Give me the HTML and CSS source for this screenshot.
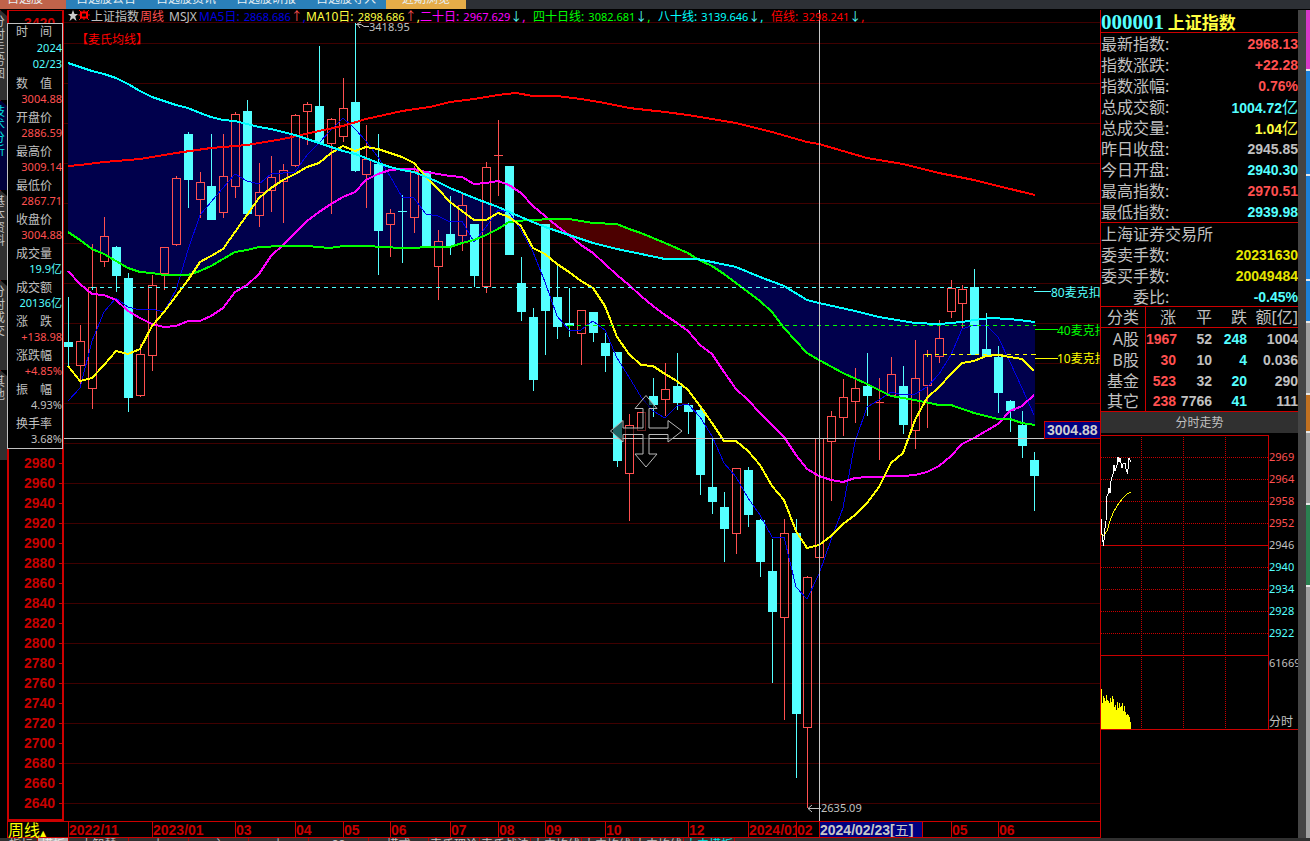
FILE: index.html
```
<!DOCTYPE html>
<html lang="zh-CN">
<head>
<meta charset="utf-8">
<title>上证指数 周线</title>
<link rel="stylesheet" href="styles.css">
</head>
<body>
<nav class="tabs">
  <a class="tab tab-own" href="#">自选股</a>
  <a class="tab" href="#">自选股公告</a>
  <a class="tab" href="#">自选股资讯</a>
  <a class="tab" href="#">自选股研报</a>
  <a class="tab" href="#">自选股导入</a>
  <a class="tab tab-recent" href="#">近期浏览</a>
</nav>
<div class="app">
  <nav class="side">
    <a class="side-tab" href="#"><span>分时走势图</span></a>
    <a class="side-tab side-on" href="#"><span>技术分析</span></a>
    <a class="side-tab" href="#"><span>基本资料</span></a>
    <a class="side-tab" href="#"><span>分时成交</span></a>
    <a class="side-tab" href="#"><span>其他</span></a>
  </nav>
  <main class="main">
    <div class="chart-row">
      <div class="axis">
        <div class="axis-labels" id="axis"></div>
        <section class="info">
          <div class="info-date"><h3>时　间</h3><p class="c">2024</p><p class="c">02/23</p></div>
          <div class="info-item"><h3>数　值</h3><p class="r">3004.88</p></div>
          <div class="info-item"><h3>开盘价</h3><p class="r">2886.59</p></div>
          <div class="info-item"><h3>最高价</h3><p class="r">3009.14</p></div>
          <div class="info-item"><h3>最低价</h3><p class="r">2867.71</p></div>
          <div class="info-item"><h3>收盘价</h3><p class="r">3004.88</p></div>
          <div class="info-item"><h3>成交量</h3><p class="c">19.9亿</p></div>
          <div class="info-item"><h3>成交额</h3><p class="c">20136亿</p></div>
          <div class="info-item"><h3>涨　跌</h3><p class="r">+138.98</p></div>
          <div class="info-item"><h3>涨跌幅</h3><p class="r">+4.85%</p></div>
          <div class="info-item"><h3>振　幅</h3><p>4.93%</p></div>
          <div class="info-item"><h3>换手率</h3><p>3.68%</p></div>
        </section>
      </div>
      <div class="plot">
        <svg class="plot-svg" viewBox="64 10 1036 811" preserveAspectRatio="xMinYMin meet">
          <g id="grid" class="grid"></g>
          <g id="bands"></g>
          <g id="candles" class="candles"></g>
          <g id="lines" class="lines"></g>
          <g class="dashes">
            <path d="M92 287.5H1034" stroke="#5ff"/><path d="M569 325.5H1034" stroke="#0f0"/><path d="M927 354.5H1034" stroke="#ff0"/>
            <path class="solid" d="M1034 291.5H1051M91 287.5h3M92.500 287v3M1033 287.500h3" stroke="#5ff"/><path class="solid" d="M1035 329.5H1058M567 325.5h5M569.500 325v3M1033 325.500h3" stroke="#0f0"/><path class="solid" d="M1035 358.5H1058M925 354.5h5M927.500 354v3M1033 354.500h3" stroke="#ff0"/>
          </g>
          <g class="cjk">
            <text x="1051" y="297" fill="#5ff">80麦克扣</text>
            <text x="1057" y="335" fill="#0f0">40麦克扣</text>
            <text x="1057" y="363" fill="#ff0">10麦克扣</text>
            <text x="76" y="44" class="title">【麦氏均线】</text>
          </g>
          <path class="note" d="M369 26.5h-5l-3-2h-5M361 22l-4 2l3 4M821 808.5H808M812 805l-4 3.5l4 3.5"/>
          <text class="num" x="369" y="31">3418.95</text>
          <text class="num" x="821" y="812">2635.09</text>
          <path class="cross" d="M64 438.5H1100M819.5 10V821"/>
          <rect class="price-box" x="1044.5" y="421.5" width="56" height="17"/>
          <text class="price" x="1047" y="435">3004.88</text>
          <path class="move" d="M610.5 431L623 420.500V428H643V408.500H635L646 395.500L657 408.500H649V428H668V420.500L682 431L668 442V434.500H649V454H657L646 467L635 454H643V434.500H623V442Z"/>
        </svg>
        <header class="legend">
          <span class="icons"><svg width="22" height="12" viewBox="0 0 22 12"><path fill="#ccc" d="M5 0l1.500 4H10L7.200 6.600L8.500 11L5 8.300L1.500 11L2.800 6.600L0 4h3.500z"/><path fill="none" stroke="#f00" stroke-width="2" d="M13 2.500h6v5h-6z"/><path stroke="#f00" fill="none" d="M11 0l2 2M21 0l-2 2M11 10l2-2M21 10l-2-2M10.500 5h2M20 5h2M16 0v2M16 8v2"/></svg></span>
          <span>上证指数</span><span class="red-soft">周线</span><span>MSJX</span>
          <span class="blue">MA5日: <b>2868.686</b><i class="red-soft">↑</i>,</span>
          <span class="yellow">MA10日: <b>2898.686</b><i class="red-soft">↑</i>,</span>
          <span class="magenta">二十日: <b>2967.629</b><i class="c">↓</i>,</span>
          <span class="green">四十日线: <b>3082.681</b><i class="c">↓</i>,</span>
          <span class="aqua">八十线: <b>3139.646</b><i class="c">↓</i>,</span>
          <span class="red">倍线: <b>3298.241</b><i class="c">↓</i>,</span>
        </header>
      </div>
    </div>
    <div class="timeline">
      <button class="period">周线<small>▲</small></button>
      <span>2022/11</span><span>2023/01</span><span>03</span><span>04</span><span>05</span><span>06</span><span>07</span><span>08</span><span>09</span><span>10</span><span>12</span><span>2024/01</span><span>02</span><span class="now">2024/02/23[<em>五</em>]</span><span></span><span>05</span><span>06</span>
    </div>
  </main>
  <aside class="quote">
    <h1><b>000001</b> 上证指数</h1>
    <dl class="rows">
      <div><dt>最新指数:</dt><dd class="r">2968.13</dd></div>
      <div><dt>指数涨跌:</dt><dd class="r">+22.28</dd></div>
      <div><dt>指数涨幅:</dt><dd class="r">0.76%</dd></div>
      <div><dt>总成交额:</dt><dd class="c">1004.72<em>亿</em></dd></div>
      <div><dt>总成交量:</dt><dd class="y">1.04<em>亿</em></dd></div>
      <div><dt>昨日收盘:</dt><dd>2945.85</dd></div>
      <div><dt>今日开盘:</dt><dd class="c">2940.30</dd></div>
      <div><dt>最高指数:</dt><dd class="r">2970.51</dd></div>
      <div><dt>最低指数:</dt><dd class="c">2939.98</dd></div>
    </dl>
    <dl class="rows">
      <div><dt>上海证券交易所</dt></div>
      <div><dt>委卖手数:</dt><dd class="gold">20231630</dd></div>
      <div><dt>委买手数:</dt><dd class="gold">20049484</dd></div>
      <div><dt class="indent">委比:</dt><dd class="c">-0.45%</dd></div>
    </dl>
    <table class="stats">
      <thead><tr><th>分类</th><th>涨</th><th>平</th><th>跌</th><th>额[亿]</th></tr></thead>
      <tbody>
        <tr><th>A股</th><td class="r">1967</td><td>52</td><td class="c">248</td><td>1004</td></tr>
        <tr><th>B股</th><td class="r">30</td><td>10</td><td class="c">4</td><td>0.036</td></tr>
        <tr><th>基金</th><td class="r">523</td><td>32</td><td class="c">20</td><td>290</td></tr>
        <tr><th>其它</th><td class="r">238</td><td>7766</td><td class="c">41</td><td>111</td></tr>
      </tbody>
    </table>
    <h2>分时走势</h2>
    <div class="mini">
      <svg class="mini-svg" viewBox="1101 434 168 294">
        <path class="mini-dots" d="M1101 456.500H1268M1101 478.500H1268M1101 500.500H1268M1101 522.500H1268M1101 566.500H1268M1101 588.500H1268M1101 610.500H1268M1101 632.500H1268M1141.500 436V728M1183.500 436V728M1225.500 436V728"/>
        <path class="mini-frame" d="M1101 434.500H1268.500V728M1101 544.500H1268M1101 654.500H1268"/>
        <path fill="#ff0" d="M1101 728V688h1v14h1v-7h1v2h1v3h1v-6h1v5h1v1h1v2h1v-5h1v4h1v-6h1v3h1v8h1v-2h1v5h1v-8h1v6h1v-5h1v4h1v-1h1v-3h1v8h1v-5h1v6h1v3h1v-1h1v1h1v2h1v5h1v10z"/>
        <path class="mini-avg" d="M1101 532L1103 535L1107 530L1110 520L1113 512L1117 505L1122 498L1127 493L1131 491"/>
        <path class="mini-price" d="M1101.500 518L1102 533L1103.500 545L1105 527L1106 520L1107 495L1108 493L1109 487L1110 492L1111 480L1113 473L1114 464L1115 470L1117 464L1118 456L1119 461L1120 457L1122 467L1123 463L1125 462L1126 468L1127.500 473L1129 457L1131 461"/>
      </svg>
      <div class="mini-labels">
        <span class="r">2969</span><span class="r">2964</span><span class="r">2958</span><span class="r">2952</span><span>2946</span><span class="c">2940</span><span class="c">2934</span><span class="c">2928</span><span class="c">2922</span><span class="vol">61669</span><em>分时</em>
      </div>
    </div>
  </aside>
  <div class="edge"></div>
  <div class="behind"><i class="pink"></i><i class="sky"></i><i class="sky"></i><i class="sky tall"></i><i class="gray"></i><i class="orange"></i><i class="gray"></i><i class="leaf"></i><i class="gray rest"></i></div>
</div>
<footer class="templates">
  <a href="#">指标</a><a class="lit" href="#">模板</a><a class="wide" href="#">大智慧</a><a class="wide" href="#">上</a><a class="wide" href="#">主</a><a class="wide" href="#">上</a><a class="wide" href="#">88</a><a class="wide" href="#">模式</a><a href="#">麦氏理论</a><a href="#">麦氏战法</a><a href="#">大中均线</a><a href="#">大中均线</a><a href="#">大中均线</a><a class="cyan" href="#">大中模板</a>
</footer>
<script src="chart.js"></script>
</body>
</html>
```
FILE: styles.css
```
* { box-sizing: border-box; margin: 0; padding: 0; }
body {
  min-height: 100vh; background: #000; color: #c0c0c0; overflow: hidden;
  display: flex; flex-direction: column;
  font: 12px/14px "Noto Sans", "Noto Sans CJK SC", sans-serif;
}
a { color: inherit; text-decoration: none; }
em, i { font-style: normal; font-weight: normal; }
.r, .red-soft { color: #ff5050; }
.c { color: #54ffff; }
.y, .yellow { color: #ffff40; }
.gold { color: #e6e600; }
.blue { color: #0000e0; }
.magenta { color: #ff00ff; }
.green { color: #00ff00; }
.aqua { color: #00ffff; }
.red { color: #ff0000; }

.tabs { display: flex; height: 9px; background: #2d3035; overflow: hidden; flex: none; }
.tab { width: 80px; height: 9px; background: #2a80b9; color: #e8f0f4; line-height: 12px; display: flex; justify-content: center; align-items: flex-end; padding-bottom: 4px; }
.tab-own { width: 66px; background: #c0634a; padding-right: 16px; }
.tab-recent { background: #e5ac48; }

.app { flex: 1; display: flex; min-height: 0; padding-top: 1px; }
.side { width: 7px; flex: none; overflow: hidden; display: flex; flex-direction: column; background: #000; }
.side-tab { height: 90px; flex: none; background: #303030; border-top: 1px solid #b00; display: flex; justify-content: flex-end; padding-top: 4px; clip-path: polygon(0 0, 100% 6px, 100% 100%, 0 100%); }
.side-tab span { width: 12px; font-size: 12px; line-height: 13px; word-break: break-all; margin-right: 2px; flex: none; }
.side-on { background: #00003c; color: #00e0e0; }

.main { flex: 1; min-width: 0; display: flex; flex-direction: column; }
.chart-row { flex: 1; display: flex; min-height: 0; }
.axis { width: 57px; flex: none; position: relative; border: 2px solid #c00; border-width: 1px 2px 2px 2px; }
.axis-labels { height: 100%; padding-top: 2px; overflow: hidden; }
.axis-labels span { display: flex; align-items: center; justify-content: space-between; height: 20px; padding-left: 15px; font: bold 14px/20px "Liberation Sans", sans-serif; color: #c80000; }
.axis-labels span::after { content: ""; width: 3px; height: 1px; background: #c80000; }
.info { position: absolute; left: -2px; top: 12px; width: 56px; background: #000; border: 1px solid #c0c0c0; }
.info h3 { font-size: 12px; font-weight: normal; line-height: 16px; padding-left: 8px; white-space: nowrap; }
.info p { font-size: 11px; line-height: 13px; text-align: right; }
.info-date { height: 52px; }
.info-date p { line-height: 16px; }
.info-item { height: 34px; }
.info-item:last-child { height: 32px; }

.plot { flex: 1; min-width: 0; position: relative; overflow: hidden; }
.plot-svg { display: block; width: 100%; height: auto; }
.legend { position: absolute; left: 4px; top: 0; height: 13px; line-height: 13px; display: grid; grid-template-columns: 23px 49px 29px 30px 107px 114px 113px 125px 113px auto; white-space: nowrap; font-size: 12px; }
.legend b { font-weight: normal; font-size: 11px; padding-left: 1px; }
.legend i { font-size: 12px; }
.icons svg { display: block; }
.grid path { stroke: #400000; fill: none; shape-rendering: crispEdges; }
.candles, .lines, .cross, .dashes, .price-box { shape-rendering: crispEdges; }
.lines polyline { fill: none; stroke-width: 2; }
.lines .thin { stroke-width: 1; }
.down { fill: #54ffff; }
.up { fill: none; stroke: #ff5050; }
.dashes path { stroke-dasharray: 4 4; fill: none; }
.dashes .solid { stroke-dasharray: none; }
.cjk text { font-size: 12px; }
.cjk .title { fill: #f00; }
.note { stroke: #c0c0c0; fill: none; }
.num { fill: #c0c0c0; font-size: 11px; }
.cross { stroke: #c8c8c8; fill: none; }
.price-box { fill: #000080; stroke: #c00; }
.price { fill: #d0d0d0; font: bold 14px "Liberation Sans", sans-serif; }
.move { fill: #000; fill-opacity: .6; stroke: #b8b8b8; }

.timeline { display: grid; height: 17px; flex: none; border: 1px solid #c00; border-width: 1px 0 1px 1px; grid-template-columns: 60px 84fr 83fr 60fr 48fr 47fr 60fr 48fr 47fr 60fr 83fr 60fr 48fr 23fr 103fr 29fr 47fr 102fr; font: bold 14px/16px "Liberation Sans", "Noto Sans CJK SC", sans-serif; color: #c80000; }
.timeline span { border-left: 1px solid #c00; min-width: 0; overflow: hidden; white-space: nowrap; height: 15px; }
.timeline .now { background: #000080; color: #c8c8c8; }
.period { border: 0; background: none; color: #ff0; font: 16px/15px "Noto Sans CJK SC", sans-serif; text-align: left; white-space: nowrap; height: 15px; }
.period small { font: 8px/15px "DejaVu Sans", sans-serif; }

.quote { width: 198px; flex: none; border-left: 1px solid #c00; overflow: hidden; font-size: 16px; }
.quote h1 { font: bold 17px/23px "Noto Sans CJK SC", sans-serif; color: #ffff40; height: 23px; border-bottom: 1px solid #c00; white-space: nowrap; }
.quote h1 b { font: bold 21px/22px "Liberation Serif", serif; color: #54ffff; }
.rows { border-bottom: 1px solid #c00; }
.rows div { display: flex; justify-content: space-between; height: 21px; line-height: 22px; }
.rows dt { white-space: nowrap; }
.rows .indent { padding-left: 32px; }
.rows dd { font: bold 14px/23px "Liberation Sans", sans-serif; }
.rows em { font: 16px/21px "Noto Sans CJK SC", sans-serif; }
.rows + .rows { height: 84px; }
.stats { width: 100%; table-layout: fixed; border-collapse: separate; border-spacing: 0; border-bottom: 1px solid #c00; }
.stats th { font-size: 16px; font-weight: normal; height: 21px; line-height: 20px; text-align: right; white-space: nowrap; }
.stats tbody tr:last-child > * { height: 20px; }
.stats thead th { border-bottom: 1px solid #c00; }
.stats th:first-child { width: 45px; padding-right: 6px; border-right: 1px solid #c00; }
.stats thead th:nth-child(2) { width: 30px; }
.stats thead th:nth-child(3) { width: 36px; }
.stats thead th:nth-child(4) { width: 35px; }
.stats td { font: bold 14px/20px "Liberation Sans", sans-serif; text-align: right; }
.quote h2 { font-size: 12px; line-height: 21px; font-weight: normal; text-align: center; background: #303030; margin-bottom: 2px; }
.mini { display: flex; border-bottom: 1px solid #c00; }
.mini-svg { width: 168px; flex: none; display: block; shape-rendering: crispEdges; }
.mini path { fill: none; }
.mini path[fill] { fill: #ff0; }
.mini-frame { stroke: #c80000; }
.mini-dots { stroke: #c80000; stroke-dasharray: 1 1; }
.mini-avg { stroke: #ff0; }
.mini-price { stroke: #fff; }
.mini-labels { flex: 1; display: flex; flex-direction: column; padding-top: 11px; font-size: 11px; line-height: 22px; }
.mini-labels .vol { margin-top: 8px; }
.mini-labels em { margin-top: auto; font-size: 12px; line-height: 15px; }
.edge { width: 8px; background: #444; flex: none; }
.behind { width: 4px; flex: none; display: flex; flex-direction: column; gap: 2px; background: #e8e8e8; }
.behind .pink { height: 59px; background: #d838c8; }
.behind .sky { height: 103px; background: #1c80d8; }
.behind .sky.tall { height: 40px; }
.behind .gray { height: 70px; background: #a0a0a0; }
.behind .orange { height: 36px; background: #c07020; }
.behind .gray + .leaf { height: 80px; background: #2a8050; }
.behind .gray.rest { flex: 1; height: auto; }

.templates { height: 4px; flex: none; overflow: hidden; display: flex; background: #303030; padding-left: 8px; line-height: 14px; white-space: nowrap; }
.templates a { border-right: 1px solid #b00; padding: 0 1px; min-width: 30px; overflow: hidden; }
.templates .lit { background: #b0b0b0; color: #eee; padding: 0 3px; }
.templates .wide { width: 60px; text-align: center; }
.templates .cyan { color: #00e8e8; }
```
FILE: chart.js
```
const NS = "http://www.w3.org/2000/svg";
// Bars are 12 units apart, one unit closer at each of these indexes
const narrow = [12, 25, 37, 52, 62, 75];
const xAt = i => 68 + i * 12 - narrow.filter(n => n <= i).length;
function add(parent, tag, attrs) {
  const el = document.createElementNS(NS, tag);
  for (const k in attrs) el.setAttribute(k, attrs[k]);
  document.getElementById(parent).appendChild(el);
}

// [direction, high, body top, body bottom, low]
const candles = [
["c",297,342,347,368],["r",325,341,365,386],["r",244,287,388,409],["r",217,236,261,267],["c",246,247,276,292],["c",273,278,398,412],["r",344,354,395,397],["r",275,285,355,371],["r",247,247,273,290],["r",176,178,244,246],
["c",132,134,180,208],["r",172,182,199,218],["c",134,186,220,220],["r",134,176,212,218],["r",112,114,186,198],["c",100,111,214,214],["r",163,192,215,227],["r",156,177,190,212],["r",164,170,181,223],["r",114,115,165,167],
["r",102,104,111,145],["c",46,106,143,143],["r",118,119,143,214],["r",78,108,136,142],["c",23,102,171,172],["r",125,159,174,208],["c",134,164,231,275],["r",209,213,224,257],["c",195,211,212,263],["r",166,171,217,233],
["c",171,171,246,248],["r",230,241,266,300],["c",196,234,246,255],["r",193,205,235,251],["c",224,224,276,287],["r",162,167,286,293],["r",120,155,155,196],["c",166,166,255,255],["c",257,283,312,321],["c",308,317,380,391],
["c",224,224,311,355],["c",266,297,327,339],["c",288,323,326,337],["r",310,310,333,365],["c",312,312,333,342],["c",333,343,356,372],["c",352,352,461,467],["r",414,425,473,521],["r",412,412,430,430],["c",378,396,405,417],
["r",363,389,399,416],["c",353,386,403,410],["c",403,405,412,434],["c",408,410,475,495],["c",438,487,502,514],["c",492,507,529,562],["r",468,468,533,554],["c",467,470,515,527],["c",519,520,562,577],["c",539,571,612,683],
["r",519,533,617,720],["c",519,533,714,778],["r",576,577,727,808],["r",438,438,557,557],["r",411,416,441,501],["r",379,397,417,436],["r",368,388,401,423],["c",353,386,396,416],["r",378,402,403,460],["r",357,374,395,395],
["c",366,386,425,434],["r",340,378,430,449],["r",350,354,385,428],["r",320,338,356,363],["r",280,288,311,318],["r",285,289,303,328],["c",269,287,355,355],["c",313,349,357,357],["c",346,357,393,413],["c",400,401,411,432],
["c",411,425,446,458],["c",452,460,476,511]
];

const ma5 = [401,388,341,312,298,307,310,309,312,290,250,215,202,188,174,181,184,174,173,172,155,143,130,118,129,141,157,176,197,198,214,216,222,221,242,227,210,212,230,252,282,316,330,330,321,330,358,377,397,411,418,406,404,417,436,463,477,498,515,537,537,587,599,574,540,508,442,407,400,392,395,394,387,374,355,329,325,325,337,362,388,415];
const ma10 = [366,381,378,365,351,354,349,326,312,296,280,262,256,249,232,215,198,188,180,174,167,163,153,146,151,147,149,153,157,163,177,189,202,211,220,220,213,217,226,248,254,264,272,281,288,306,337,354,365,366,374,381,390,406,423,441,441,451,465,486,500,531,548,545,536,524,515,503,487,463,453,420,398,387,374,363,361,356,355,357,359,371];
const ma20 = [271,284,294,295,300,311,318,324,327,326,321,321,316,308,292,285,274,256,245,233,221,212,204,197,192,180,174,170,169,169,172,174,176,177,184,183,181,185,193,206,216,226,235,245,253,264,275,285,296,306,315,323,331,345,354,372,389,400,413,425,437,455,469,476,480,482,478,477,477,476,476,475,472,466,456,444,438,431,424,411,406,395];

const flat = pts => pts.map(p => p.join(",")).join(" ");
const daily = ys => ys.map((y, i) => [xAt(i), y]);
const ma80 = [[68,63],[80,67],[92,71],[104,74],[116,78],[128,84],[140,91],[152,97],[164,101],[176,105],[188,108],[200,113],[211,117],[223,120],[235,121],[247,124],[259,127],[271,129],[283,132],[295,135],[307,139],[319,143],[331,147],[343,151],[355,154],[366,158],[378,163],[390,167],[402,170],[414,172],[438,182],[450,188],[474,198],[498,207],[521,217],[528,220],[545,227],[569,235],[593,243],[617,249],[641,254],[665,259],[697,259],[712,262],[736,267],[748,272],[760,277],[784,286],[807,300],[819,303],[855,311],[879,317],[915,323],[939,324],[962,322],[974,320],[990,318],[1010,319],[1035,322]];
const ma40 = [[68,232],[80,240],[92,249],[104,254],[116,261],[128,268],[140,272],[152,273],[164,275],[188,275],[200,271],[211,266],[223,259],[235,252],[247,250],[259,247],[283,246],[307,246],[330,248],[343,246],[366,246],[402,248],[438,247],[450,247],[462,243],[474,240],[486,235],[498,229],[509,222],[528,220],[557,219],[569,219],[581,221],[593,223],[617,224],[629,229],[641,233],[665,243],[688,253],[697,259],[712,266],[724,274],[736,283],[748,292],[760,301],[772,312],[784,328],[807,353],[819,360],[843,373],[867,384],[891,396],[915,400],[939,405],[951,405],[974,413],[998,419],[1010,419],[1022,423],[1035,425]];
const ma160 = [[68,166],[80,165],[104,162],[140,159],[176,153],[211,148],[247,145],[283,139],[319,131],[343,126],[366,119],[402,111],[430,107],[450,102],[474,99],[486,97],[498,95],[516,93],[533,96],[557,96],[581,99],[605,103],[629,108],[665,112],[688,115],[736,123],[772,132],[807,142],[819,144],[843,151],[867,158],[903,164],[939,173],[974,180],[998,186],[1035,195]];

let grid = "M64 22.5H1100";
for (let y = 43; y < 821; y += 40) grid += `M64 ${y}.5H1100`;
add("grid", "path", { d: grid });

// Shade the space between the 80 and 40 period averages, split where they cross
function band(from, to, fill) {
  const within = p => p[0] >= from && p[0] <= to;
  add("bands", "polygon", { points: flat([...ma80.filter(within), ...ma40.filter(within).reverse()]), fill });
}
band(68, 528, "#00004c");
band(528, 697, "#4c0000");
band(697, 1035, "#00004c");

candles.forEach(([kind, high, top, bottom, low], i) => {
  const x = xAt(i);
  if (kind === "c") {
    add("candles", "path", { class: "down", d: `M${x} ${high}h1V${low}h-1zM${x - 4} ${top}h9V${bottom}h-9z` });
  } else {
    const body = bottom - top < 2 ? `M${x - 4} ${top}.5h9` : `M${x - 3.5} ${top}.5h8V${bottom}.5h-8z`;
    add("candles", "path", { class: "up", d: `M${x}.5 ${high}V${top}M${x}.5 ${bottom}V${low}${body}` });
  }
});

[[daily(ma5), "#0000e8", "thin"], [ma160, "#f00", ""], [daily(ma20), "#f0f", ""], [ma40, "#0f0", ""], [daily(ma10), "#ff0", ""], [ma80, "#0ff", ""]]
  .forEach(([pts, stroke, cls]) => add("lines", "polyline", { points: flat(pts), stroke, class: cls }));

// The info box covers the steps from 3400 to 3000, so those stay blank
for (let v = 3420; v >= 2640; v -= 20) {
  const s = document.createElement("span");
  if (v === 3420 || v < 3000) s.textContent = v;
  document.getElementById("axis").appendChild(s);
}
```
